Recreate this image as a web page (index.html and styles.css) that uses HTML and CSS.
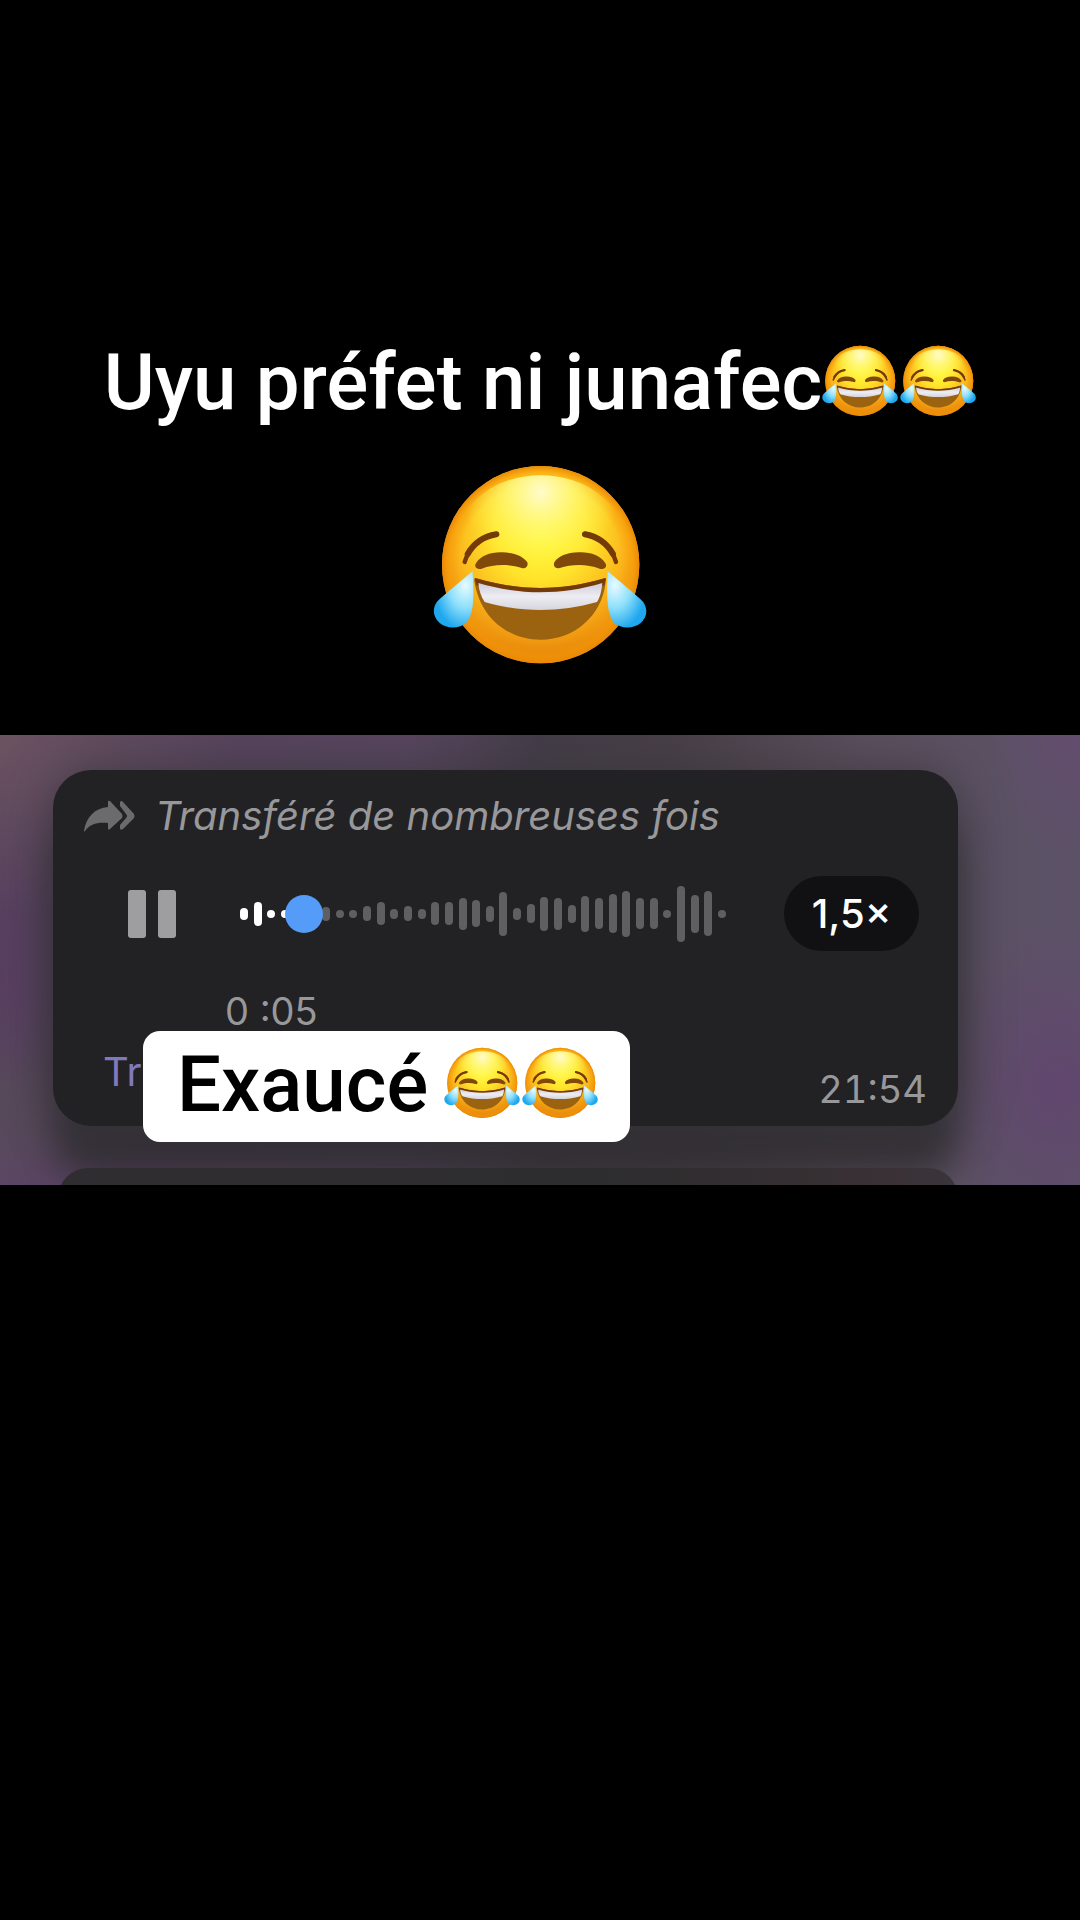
FILE: index.html
```html
<!DOCTYPE html>
<html lang="fr">
<head>
  <meta charset="UTF-8" />
  <meta name="viewport" content="width=device-width, initial-scale=1.0" />
  <title>Uyu préfet ni junafec</title>
  <link rel="stylesheet" href="styles.css">
</head>
<body>
  <!-- shared emoji drawing -->
  <svg class="defs" width="0" height="0" aria-hidden="true">
    <defs>
      <radialGradient id="face" gradientUnits="userSpaceOnUse" cx="361" cy="230" r="395">
        <stop offset="0" stop-color="#fffb3a" />
        <stop offset="0.35" stop-color="#ffe52c" />
        <stop offset="0.65" stop-color="#fbb71c" />
        <stop offset="0.85" stop-color="#ee950f" />
        <stop offset="1" stop-color="#d87408" />
      </radialGradient>
      <radialGradient id="edge" gradientUnits="userSpaceOnUse" cx="361" cy="328" r="297">
        <stop offset="0.82" stop-color="#f79a08" stop-opacity="0" />
        <stop offset="0.93" stop-color="#f79a08" stop-opacity="0.6" />
        <stop offset="1" stop-color="#ea8806" />
      </radialGradient>
      <radialGradient id="shine" gradientUnits="userSpaceOnUse" cx="361" cy="110" r="235">
        <stop offset="0" stop-color="#fffccc" />
        <stop offset="0.4" stop-color="#fff980" stop-opacity="0.8" />
        <stop offset="1" stop-color="#fff64a" stop-opacity="0" />
      </radialGradient>
      <linearGradient id="teeth" x1="0" y1="0" x2="0" y2="1">
        <stop offset="0" stop-color="#cfcdda" />
        <stop offset="0.5" stop-color="#eeedf3" />
        <stop offset="1" stop-color="#d5d5de" />
      </linearGradient>
      <radialGradient id="tear-left" cx="0.8" cy="0.25" r="0.8">
        <stop offset="0" stop-color="#e6fbff" />
        <stop offset="0.5" stop-color="#8fe0fb" />
        <stop offset="1" stop-color="#20a8ee" />
      </radialGradient>
      <radialGradient id="tear-right" cx="0.2" cy="0.25" r="0.8">
        <stop offset="0" stop-color="#e6fbff" />
        <stop offset="0.5" stop-color="#8fe0fb" />
        <stop offset="1" stop-color="#20a8ee" />
      </radialGradient>
      <symbol id="joy" viewBox="38 30 642 598">
        <ellipse cx="361" cy="328" rx="296" ry="296" fill="url(#face)" />
        <ellipse cx="361" cy="328" rx="296" ry="296" fill="url(#edge)" />
        <ellipse cx="361" cy="245" rx="245" ry="185" fill="url(#shine)" />
        <g fill="none" stroke="#743a08" stroke-linecap="round">
          <path d="M133 320C146 278 178 243 230 236" stroke-width="13" />
          <path d="M142 296C162 262 190 243 228 237" stroke-width="18" />
          <path d="M587 320C574 278 542 243 492 236" stroke-width="13" />
          <path d="M578 296C558 262 530 243 494 237" stroke-width="18" />
        </g>
        <path d="M166 325C182 300 210 290 246 291C283 292 309 303 321 321C325 333 315 342 304 338C267 326 220 326 184 340C171 343 161 336 166 325Z" fill="#80480a" />
        <path d="M556 325C540 300 512 290 476 291C439 292 413 303 402 321C397 333 407 342 418 338C455 326 502 326 538 340C551 343 561 336 556 325Z" fill="#80480a" />
        <path d="M162 377C160 368 166 367 175 370C300 407 422 407 547 370C556 367 559 369 556 380C545 482 462 553 361 553C260 553 178 484 162 377Z" fill="#9b6210" />
        <path d="M163 368C300 408 422 408 556 368L552 390C422 420 300 420 168 390Z" fill="#743a08" />
        <path d="M174 383C300 420 422 420 546 383C544 406 539 427 530 440C420 472 300 472 193 440C182 424 176 406 174 383Z" fill="url(#teeth)" />
        <path d="M157 348C134 367 72 418 50 439C35 460 38 485 58 503C80 522 120 520 138 502C163 474 160 420 157 348Z" fill="url(#tear-left)" />
        <path d="M562 348C585 367 646 418 668 439C683 460 681 485 661 503C639 522 600 520 581 502C558 474 559 420 562 348Z" fill="url(#tear-right)" />
      </symbol>
    </defs>
  </svg>

  <main>
    <h1 class="title">
      <span>Uyu préfet ni junafec</span>
      <svg class="emoji" role="img" aria-label="mort de rire"><use href="#joy" /></svg>
      <svg class="emoji" role="img" aria-label="mort de rire"><use href="#joy" /></svg>
    </h1>
    <svg class="emoji-big" role="img" aria-label="mort de rire"><use href="#joy" /></svg>

    <section class="chat">
      <article class="message">
        <div class="forwarded">
          <svg class="forward-icon" viewBox="0 0 52 32" aria-hidden="true">
            <path d="M1 31C3 17 12 8 25 7V2Q25 0 27 1L39 14Q40 16 39 18L27 29Q25 31 25 28V23C14 22 7 24 2 31Q1 32 1 31Z" />
            <path d="M37 2Q38 0 40 2L51 14Q52 16 51 18L40 29Q37 31 37 28V25L43 18Q45 16 43 14L37 6Z" />
          </svg>
          <em>Transféré de nombreuses fois</em>
        </div>

        <div class="player">
          <button type="button" class="pause" aria-label="Pause"><i></i><i></i></button>
          <div class="track">
            <div class="wave" id="wave"></div>
            <input type="range" class="seek" min="0" max="100" value="10" aria-label="Position" />
          </div>
          <button type="button" class="speed">1,5×</button>
        </div>

        <div class="elapsed">0 :05</div>
        <div class="footer">
          <button type="button" class="transcribe">Tr</button>
          <time>21:54</time>
        </div>

        <p class="caption">
          <span>Exaucé</span>
          <svg class="emoji" role="img" aria-label="mort de rire"><use href="#joy" /></svg>
          <svg class="emoji" role="img" aria-label="mort de rire"><use href="#joy" /></svg>
        </p>
      </article>
      <div class="next-message"></div>
    </section>
  </main>

  <script>
    const wave = document.getElementById('wave');
    const levels = [12, 24, 8, 8, 8, 8, 14, 8, 8, 15, 23, 10, 15, 10, 23, 23, 32, 27,
      16, 44, 12, 19, 34, 32, 18, 36, 31, 39, 46, 31, 31, 8, 56, 38, 45, 8];

    levels.forEach((level, index) => {
      const bar = document.createElement('span');
      bar.style.height = level + 'px';
      if (index < 5) bar.className = 'played';
      wave.appendChild(bar);
    });
  </script>
</body>
</html>
```
FILE: styles.css
```css
* {
  box-sizing: border-box;
}
body {
  margin: 0;
  background: #000;
  color: #fff;
  font-family: Inter, "Liberation Sans", sans-serif;
}
button {
  border: none;
  padding: 0;
  background: none;
  color: inherit;
  font-family: inherit;
  cursor: pointer;
}
.defs {
  position: absolute;
}
main {
  display: flex;
  flex-direction: column;
  align-items: center;
  padding-top: 329px;
}

/* title */
.title,
.caption {
  display: flex;
  align-items: center;
  margin: 0;
  font-family: Roboto, sans-serif;
  font-size: 78px;
  font-weight: 500;
  line-height: 100px;
  white-space: nowrap;
}
.title span,
.caption span {
  padding-top: 4px;
}
.emoji {
  flex: none;
  width: 76px;
  height: 72px;
}
.emoji + .emoji {
  margin-left: 2px;
}
.emoji-big {
  width: 214px;
  height: 200px;
  margin: 32px 0 70px;
}

/* chat */
.chat {
  align-self: stretch;
  height: 450px;
  padding: 35px 122px 0 53px;
  overflow: hidden;
  background:
    radial-gradient(ellipse 240px 180px at 0 0, #6b5361, transparent),
    radial-gradient(ellipse 150px 170px at 0 54%, #593f62, transparent),
    radial-gradient(ellipse 160px 120px at 0 78%, #575056, transparent),
    radial-gradient(ellipse 160px 130px at 0 100%, #5c4368, transparent),
    radial-gradient(ellipse 90px 120px at 100% 0, #634c6e, transparent),
    radial-gradient(ellipse 130px 160px at 98% 78%, #61466e, transparent),
    linear-gradient(90deg, #56425e 0, #58465f 38%, #443d48 50%, #483f47 62%, #5b505e 80%, #5c5268 100%);
}
.message {
  position: relative;
  height: 356px;
  padding: 22px 31px 0 30px;
  border-radius: 38px;
  background: #222224;
  box-shadow: 0 0 50px rgba(58, 54, 60, 0.8), 0 50px 36px rgba(48, 46, 50, 0.9);
}
.forwarded {
  display: flex;
  align-items: center;
  gap: 20px;
  color: #98989b;
  font-size: 40px;
  line-height: 48px;
  white-space: nowrap;
}
.forward-icon {
  width: 52px;
  height: 32px;
  fill: #6b6b6d;
}
.player {
  display: flex;
  align-items: center;
  margin-top: 36px;
  padding: 0 8px 0 45px;
}
.pause {
  display: flex;
  gap: 12px;
}
.pause i {
  width: 18px;
  height: 48px;
  border-radius: 3px;
  background: #9e9ea0;
}
.track {
  position: relative;
  flex: 1;
  margin: 0 58px 0 64px;
}
.wave {
  display: flex;
  align-items: center;
  justify-content: space-between;
  height: 56px;
}
.wave span {
  width: 8px;
  border-radius: 4px;
  background: #5f5f61;
}
.wave .played {
  background: #fff;
}
.seek {
  position: absolute;
  inset: 0;
  width: 100%;
  height: 100%;
  margin: 0;
  appearance: none;
  background: none;
}
.seek::-webkit-slider-thumb {
  appearance: none;
  width: 38px;
  height: 38px;
  border-radius: 50%;
  background: #549cf8;
}
.speed {
  width: 135px;
  height: 75px;
  border-radius: 38px;
  background: #111113;
  color: #fff;
  font-size: 40px;
  font-weight: 500;
}
.elapsed {
  margin: 36px 0 0 142px;
  color: #98989b;
  font-size: 38px;
  line-height: 48px;
}
.footer {
  display: flex;
  justify-content: space-between;
  padding-left: 20px;
  line-height: 48px;
}
.transcribe {
  align-self: flex-start;
  margin-top: 13px;
  color: #8279bd;
  font-size: 40px;
  line-height: 48px;
}
.footer time {
  margin-top: 30px;
  color: #98989b;
  font-size: 38px;
  font-variant-numeric: tabular-nums;
}
.caption {
  position: absolute;
  left: 90px;
  bottom: -16px;
  height: 111px;
  padding: 0 32px 8px 34px;
  border-radius: 17px;
  background: #fff;
  color: #000;
}
.caption span {
  margin-right: 16px;
}
.next-message {
  position: relative;
  height: 60px;
  margin: 42px 0 0 5px;
  border-radius: 38px;
  background: linear-gradient(90deg, #302d31, #2d2c2e 60%, #383034 90%, #3b353c);
}
```
